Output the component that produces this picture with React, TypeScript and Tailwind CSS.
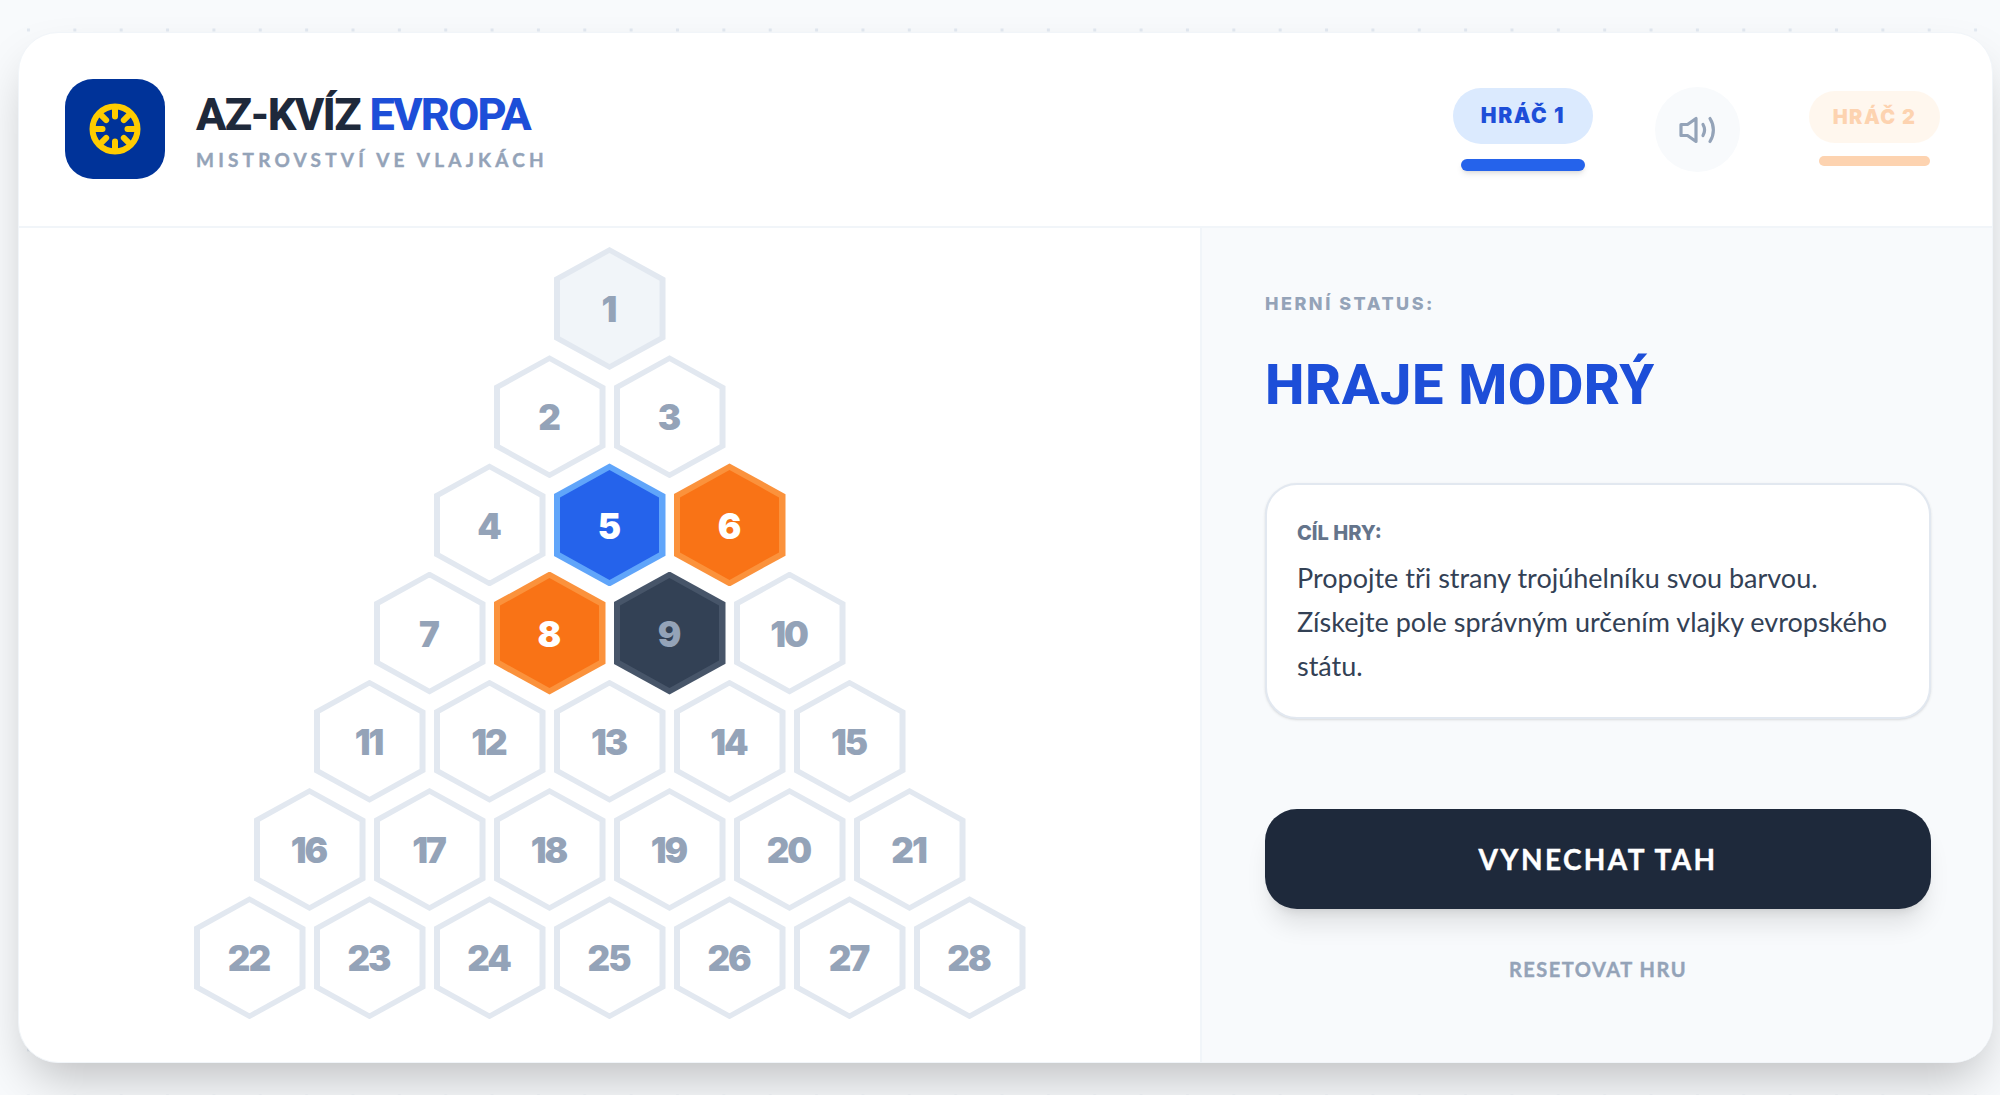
const rows = [
  [1],
  [2, 3],
  [4, 5, 6],
  [7, 8, 9, 10],
  [11, 12, 13, 14, 15],
  [16, 17, 18, 19, 20, 21],
  [22, 23, 24, 25, 26, 27, 28],
]

const hexClip = '[clip-path:polygon(50%_0,100%_25%,100%_75%,50%_100%,0_75%,0_25%)]'

function Hex({ n }: { n: number }) {
  let outer = 'bg-[#e2e8f0]'
  let inner = 'inset-[6px] bg-white'
  let text = 'text-[#94a3b8]'
  if (n === 1) inner = 'inset-[6px] bg-[#f1f5f9]'
  if (n === 5) {
    outer = 'bg-[#60a5fa]'
    inner = 'inset-[6.5px] bg-[#2563eb]'
    text = 'text-white'
  }
  if (n === 6 || n === 8) {
    outer = 'bg-[#fb923c]'
    inner = 'inset-[6.5px] bg-[#f97316]'
    text = 'text-white'
  }
  if (n === 9) {
    outer = 'bg-[#475569]'
    inner = 'inset-[6.5px] bg-[#334155]'
  }
  return (
    <div className={`relative w-[112px] h-[123px] ${outer} ${hexClip}`}>
      <div className={`absolute flex items-center justify-center pt-[2px] pr-[2px] ${inner} ${hexClip}`}>
        <span className={`font-['Inter',sans-serif] text-[35px] font-black tracking-[-2px] ${text}`}>{n}</span>
      </div>
    </div>
  )
}

function Logo() {
  const spokes = [0, 45, 90, 135, 180, 225, 270, 315]
  return (
    <div className="w-[100px] h-[100px] -mt-[2px] rounded-[28px] bg-[#003399] flex items-center justify-center shrink-0">
      <svg width="52" height="52" viewBox="0 0 52 52" fill="none" stroke="#ffcc00" strokeWidth="6" strokeLinecap="round">
        <circle cx="26" cy="26" r="22.5" />
        {spokes.map(a => (
          <line key={a} x1="26" y1="4" x2="26" y2="13.5" transform={`rotate(${a} 26 26)`} />
        ))}
      </svg>
    </div>
  )
}

function SoundIcon() {
  return (
    <svg width="38" height="28" viewBox="0 0 38 28" fill="none" stroke="#94a3b8" strokeWidth="3.2" strokeLinecap="round" strokeLinejoin="round">
      <path d="M2 8.500h6.500L17 2.500v23l-8.500-6H2z" />
      <path d="M24 8.500c2 3.500 2 7.500 0 11" />
      <path d="M31 2.500c4.500 7 4.500 16 0 23" />
    </svg>
  )
}

export default function App() {
  return (
    <div className="w-[2000px] h-[1095px] overflow-hidden bg-[#f8fafc] bg-[radial-gradient(#e2e8f0_1.5px,transparent_2px)] bg-[size:46.36px_46.36px] bg-[position:5.3px_6.8px] pt-[32px] pl-[18px] font-['Lato',sans-serif]">
      <div className="w-[1975px] h-[1031px] bg-white rounded-[40px] border border-[#f1f5f9] shadow-2xl overflow-hidden flex flex-col">

        {/* Header */}
        <header className="h-[195px] shrink-0 border-b-2 border-[#f1f5f9] flex items-center pl-[46px] pr-[52px]">
          <Logo />
          <div className="ml-[31px] flex flex-col">
            <h1 className="font-['Roboto',sans-serif] font-extrabold text-[45px] leading-[52px] mt-[1px] tracking-[-1.7px] text-[#1e293b]">
              AZ-KVÍZ <span className="text-[#1d4ed8]">EVROPA</span>
            </h1>
            <p className="mt-[7px] text-[19px] leading-[24px] font-bold tracking-[4.2px] [-webkit-text-stroke:0.4px] text-[#94a3b8]">MISTROVSTVÍ VE VLAJKÁCH</p>
          </div>

          <div className="ml-auto flex items-center">
            <div className="flex flex-col items-center gap-[15px] w-[140px]">
              <div className="w-[140px] h-[56px] rounded-full bg-[#dbeafe] flex items-center justify-center font-['Inter',sans-serif] text-[21px] font-black tracking-[1.6px] text-[#1d4ed8]">HRÁČ 1</div>
              <div className="w-[124px] h-[12px] rounded-full bg-[#2563eb] shadow-md" />
            </div>
            <div className="ml-[62px] w-[85px] h-[85px] rounded-full bg-[#f8fafc] flex items-center justify-center">
              <SoundIcon />
            </div>
            <div className="ml-[69px] flex flex-col items-center gap-[13px] w-[131px] opacity-40 -mt-[2px]">
              <div className="w-[131px] h-[52px] rounded-full bg-[#ffedd5] flex items-center justify-center font-['Inter',sans-serif] text-[20px] font-black tracking-[1.4px] text-[#fb923c]">HRÁČ 2</div>
              <div className="w-[111px] h-[10px] rounded-full bg-[#fb923c]" />
            </div>
          </div>
        </header>

        <div className="flex-1 flex min-h-0">
          {/* Board */}
          <main className="w-[1181px] shrink-0 flex flex-col items-center pt-[19px]">
            {rows.map((row, i) => (
              <div key={i} className={`flex gap-[8px] ${i > 0 ? '-mt-[14.8px]' : ''}`}>
                {row.map(n => <Hex key={n} n={n} />)}
              </div>
            ))}
          </main>

          {/* Side panel */}
          <aside className="flex-1 bg-[#f8fafc] border-l-2 border-[#f1f5f9] pl-[63px] pr-[61px] pt-[64px] flex flex-col">
            <p className="font-['Inter',sans-serif] text-[18px] leading-[24px] font-extrabold tracking-[2.5px] text-[#94a3b8]">HERNÍ STATUS:</p>
            <h2 className="mt-[34px] font-['Roboto',sans-serif] font-extrabold text-[56px] leading-[70px] tracking-[0.5px] text-[#1d4ed8]">HRAJE MODRÝ</h2>

            <div className="mt-[63px] h-[236px] bg-white rounded-[32px] border-2 border-[#e2e8f0] shadow-sm px-[30px] pt-[34px]">
              <p className="font-['Inter',sans-serif] text-[20px] leading-[28px] font-extrabold text-[#64748b]">CÍL HRY:</p>
              <p className="mt-[9px] text-[27px] leading-[44px] text-[#334155]">
                Propojte tři strany trojúhelníku svou barvou.
                <br />
                Získejte pole správným určením vlajky evropského státu.
              </p>
            </div>

            <button className="mt-[90px] h-[100px] shrink-0 rounded-[32px] bg-[#1e293b] text-white text-[28px] font-bold tracking-[2.4px] [-webkit-text-stroke:0.4px] shadow-xl">VYNECHAT TAH</button>
            <button className="mt-[46px] text-[20px] leading-[28px] font-bold tracking-[1.5px] [-webkit-text-stroke:0.4px] text-[#94a3b8]">RESETOVAT HRU</button>
          </aside>
        </div>
      </div>
    </div>
  )
}
